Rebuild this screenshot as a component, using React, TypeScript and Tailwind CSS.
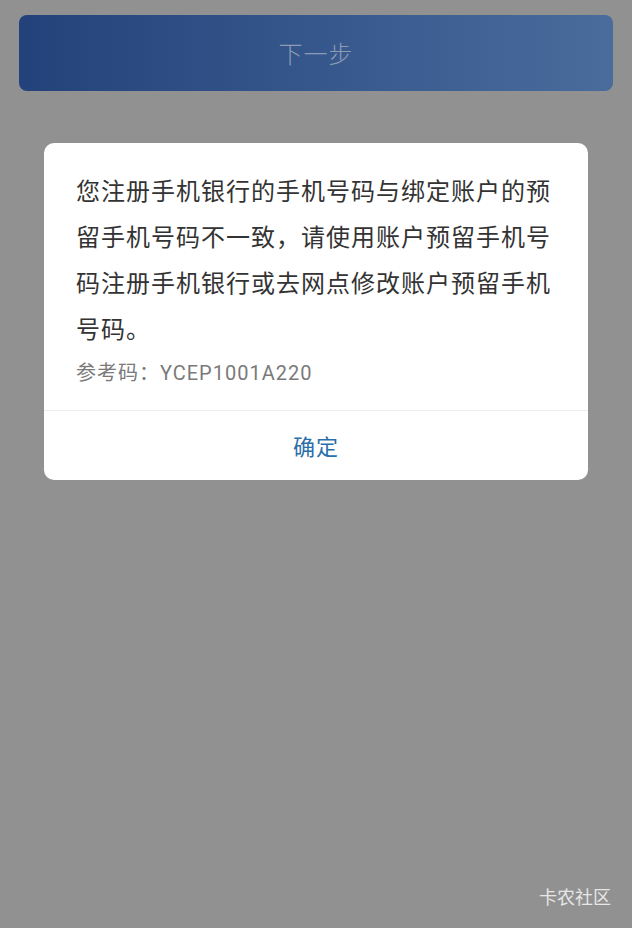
export default function App() {
  return (
    <div
      className="w-[632px] h-[928px] bg-[#919191] flex flex-col relative overflow-hidden"
      style={{ fontFamily: '"Noto Sans CJK SC", "Noto Sans", sans-serif' }}
    >
      <div className="px-[19px] pt-[15px]">
        <div className="h-[76px] rounded-[8px] bg-gradient-to-r from-[#23427b] via-[#36578c] to-[#4a6c9c] flex items-center justify-center">
          <span className="text-[24px] text-[#8d9bb5] tracking-[1px] font-light">下一步</span>
        </div>
      </div>
      <div className="mt-[52px] mx-[44px] bg-white rounded-[10px] flex flex-col">
        <div className="px-[32px] pt-[24px] pb-[22px]">
          <p className="text-[24px] leading-[46px] text-[#333333] tracking-[1px]">
            您注册手机银行的手机号码与绑定账户的预留手机号码不一致，请使用账户预留手机号码注册手机银行或去网点修改账户预留手机号码。
          </p>
          <p
            className="mt-[7px] text-[20px] leading-[30px] text-[#7a7a7a] tracking-[1px]"
            style={{ fontFamily: 'Roboto, "Noto Sans CJK SC", sans-serif' }}
          >
            参考码：YCEP1001A220
          </p>
        </div>
        <div className="h-px bg-[#ececec]" />
        <div className="h-[69px] flex items-center justify-center">
          <span className="text-[22px] text-[#2b6ea9] tracking-[1px]">确定</span>
        </div>
      </div>
      <div className="absolute right-[21px] bottom-[18px] text-[18px] text-[#e6e6e6]">卡农社区</div>
    </div>
  );
}
